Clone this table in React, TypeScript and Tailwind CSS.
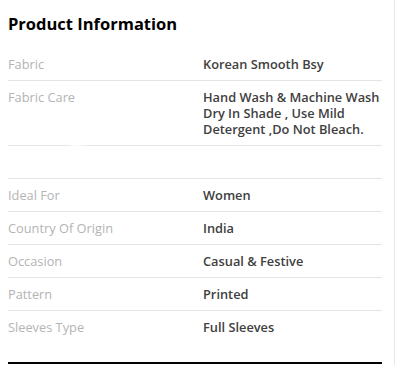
const rows: { label: string; value: string[] }[] = [
  { label: "Fabric", value: ["Korean Smooth Bsy"] },
  { label: "Fabric Care", value: ["Hand Wash & Machine Wash", "Dry In Shade , Use Mild", "Detergent ,Do Not Bleach."] },
  { label: "", value: [] },
  { label: "Ideal For", value: ["Women"] },
  { label: "Country Of Origin", value: ["India"] },
  { label: "Occasion", value: ["Casual & Festive"] },
  { label: "Pattern", value: ["Printed"] },
  { label: "Sleeves Type", value: ["Full Sleeves"] },
];

export default function App() {
  return (
    <div className="w-[395px] h-[365px] bg-white border-r border-[#e6e6e6] overflow-hidden" style={{ fontFamily: '"Open Sans", sans-serif' }}>
      <div className="pl-2 w-[382px]">
        <h2 className="pt-[12px] pb-[12px] text-[16.5px] leading-6 font-bold text-black">Product Information</h2>

        <div>
          {rows.map((row, i) => (
            <div
              key={i}
              className={`relative flex py-2 ${i < rows.length - 1 ? "border-b border-[#e4e4e4]" : ""}`}
            >
              <div className="w-[195px] shrink-0 text-[12.8px] leading-4 text-[#b4b4b4]">{row.label}</div>
              <div className="flex-1 min-h-4 text-[12.8px] leading-4 font-semibold text-[#404040]">
                {row.value.map((line, j) => (
                  <div key={j}>{line}</div>
                ))}
              </div>
              {i === 1 && (
                <div className="absolute left-[57px] -bottom-px w-[24px] h-px bg-gradient-to-r from-transparent via-white to-transparent" />
              )}
            </div>
          ))}
        </div>

        <div className="mt-[19px] h-[2px] bg-black" />
      </div>
    </div>
  );
}
